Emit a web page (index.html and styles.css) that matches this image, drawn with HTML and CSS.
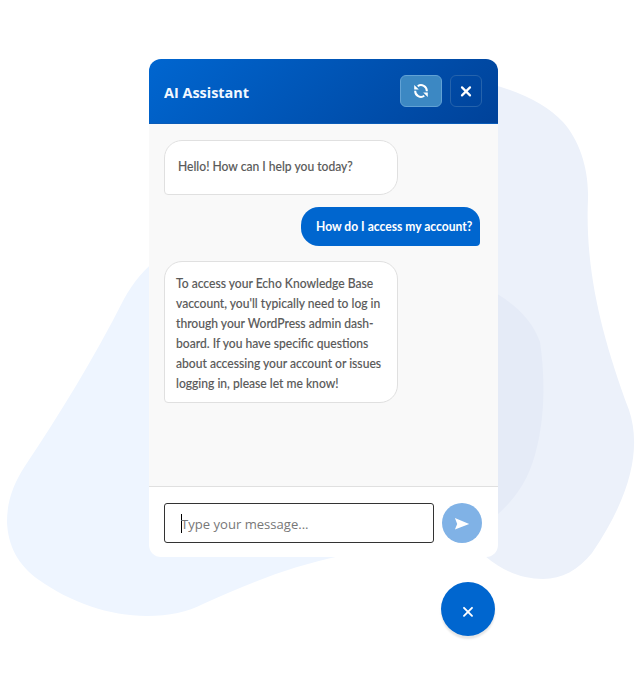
FILE: index.html
```html
<!DOCTYPE html>
<html lang="en">
<head>
<meta charset="utf-8">
<title>AI Assistant</title>
<link rel="stylesheet" href="styles.css">
</head>
<body>
<svg class="backdrop" viewBox="0 0 643 700" aria-hidden="true">
  <path fill="#eef5ff" d="M160 257C145 268 134 281 124 299C92 362 59 415 25 466C12 486 7 503 7 522C8 546 18 565 39 580C70 602 109 616 147 616C169 616 188 612 203 604C249 583 292 566 340 556L400 500V257Z"/>
  <path fill="#ecf1fa" d="M490 84C522 92 548 106 563 122C579 140 589 168 588 199C585 267 600 332 629 410C641 446 633 493 592 553C578 570 562 579 543 579C523 579 504 572 485 556L450 500V84Z"/>
  <path fill="#e5ebf7" d="M490 290C511 301 532 318 540 342C545 376 545 414 537 447C530 477 518 498 490 521Z"/>
</svg>
<main class="chat">
  <header class="chat-header">
    <h1 class="title">AI Assistant</h1>
    <button class="tool refresh" aria-label="Restart conversation">
      <svg width="16" height="16" viewBox="0 0 16 16" fill="none" stroke="#fff" stroke-width="2"><path d="M4.7 3.2A5.8 5.8 0 0 1 13.8 8.2M11.3 12.8A5.8 5.8 0 0 1 2.2 7.8"/><path fill="#fff" stroke="none" d="M1.2 2V6.6H5.8zM14.8 14V9.4H10.2z"/></svg>
    </button>
    <button class="tool close" aria-label="Close">
      <svg width="12" height="12" viewBox="0 0 12 12" stroke="#fff" stroke-width="2.2" stroke-linecap="round"><path d="M2 2.4L10 10.4M10 2.4L2 10.4"/></svg>
    </button>
  </header>
  <section class="messages">
    <div class="bubble bot greeting"><span class="text">Hello! How can I help you today?</span></div>
    <div class="bubble user"><span class="text">How do I access my account?</span></div>
    <div class="bubble bot answer"><span class="text">To access your Echo Knowledge Base<br>vaccount, you'll typically need to log in<br>through your WordPress admin dash-<br>board. If you have specific questions<br>about accessing your account or issues<br>logging in, please let me know!</span></div>
  </section>
  <footer class="composer">
    <div class="field"><span class="caret"></span><span class="placeholder">Type your message...</span></div>
    <button class="send" aria-label="Send">
      <svg width="16" height="14" viewBox="0 0 16 14" fill="#fff"><path d="M.9 1L15.2 7L.9 12.6L3.2 7Z"/></svg>
    </button>
  </footer>
</main>
<button class="launcher" aria-label="Close chat">
  <svg width="12" height="12" viewBox="0 0 12 12" stroke="#fff" stroke-width="1.9" stroke-linecap="round"><path d="M2 1.8L10 9.8M10 1.8L2 9.8"/></svg>
</button>
</body>
</html>
```
FILE: styles.css
```css
* { box-sizing: border-box; }
body {
  margin: 0;
  width: 643px;
  height: 700px;
  padding: 59px 0 0 149px;
  overflow: hidden;
  background: #fff;
}
button { padding: 0; border: 0; display: flex; align-items: center; justify-content: center; }
.backdrop { position: absolute; left: 0; top: 0; width: 643px; height: 700px; z-index: -1; }
.chat {
  width: 349px;
  height: 498px;
  border-radius: 12px;
  overflow: hidden;
  background: #fff;
  display: flex;
  flex-direction: column;
}
.chat-header {
  height: 65px;
  flex: none;
  padding: 0 16px 0 15px;
  display: flex;
  align-items: center;
  gap: 8px;
  background: linear-gradient(135deg, #0066d0, #004299);
  border-bottom: 1px solid #0a5cb8;
}
.title {
  margin: 2px auto 0 0;
  color: #f2f8ff;
  font: 700 15px/20px "Open Sans", sans-serif;
  transform: scaleX(.962);
  transform-origin: 0 50%;
}
.tool { height: 32px; border: 1px solid #2563ac; border-radius: 6px; }
.refresh { width: 42px; background: #3c88c3; border-color: #62a2d5; }
.close { width: 32px; background: transparent; }
.messages {
  height: 362px;
  flex: none;
  padding: 16px 18px 0 15px;
  background: #f9f9f9;
  display: flex;
  flex-direction: column;
  align-items: flex-start;
}
.bubble { font: 500 13px/20px Lato, sans-serif; white-space: nowrap; }
.text { display: inline-block; transform: scaleX(.93); transform-origin: 0 50%; }
.bot {
  width: 234px;
  color: #5a5a5a;
  background: #fff;
  border: 1px solid #e0e0e0;
  border-radius: 18px 18px 18px 4px;
}
.bot .text { -webkit-text-stroke: .12px #5a5a5a; }
.greeting { height: 55px; padding: 15px 13px; }
.user {
  width: 179px;
  height: 39px;
  margin: 12px 0 15px;
  padding: 9px 0 0 15px;
  align-self: flex-end;
  color: #fff;
  font-weight: 700;
  background: #0066cf;
  border-radius: 18px 16px 4px 18px;
}
.answer { height: 142px; padding: 11px; }
.composer {
  flex: 1;
  border-top: 1px solid #e0e0e0;
  padding: 16px 16px 0 15px;
  display: flex;
  gap: 8px;
}
.field {
  width: 270px;
  height: 40px;
  border: 1px solid #333;
  border-radius: 3px;
  padding: 0 16px;
  display: flex;
  align-items: center;
}
.caret { width: 1px; height: 19px; background: #000; margin-right: -1px; }
.placeholder {
  color: #777;
  font: 13.5px/20px "Open Sans", sans-serif;
  padding-top: 2px;
  transform: scaleX(.968);
  transform-origin: 0 50%;
}
.send { width: 40px; height: 40px; border-radius: 50%; background: #80b2e6; padding-top: 2px; }
.launcher {
  width: 54px;
  height: 54px;
  margin: 25px 0 0 292px;
  border-radius: 50%;
  background: #0066cf;
  box-shadow: 0 3px 2px #e6e6e6;
  padding-top: 5px;
}
```
